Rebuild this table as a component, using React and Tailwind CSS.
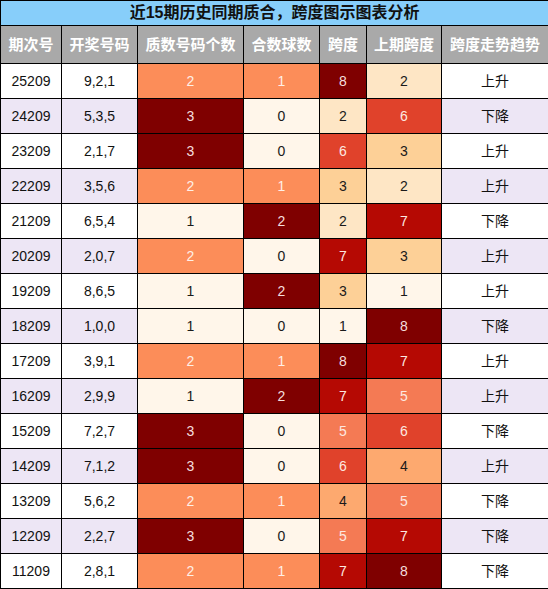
import React from "react";

const rows = [
  ["25209", "9,2,1", 2, 1, 8, 2, "上升"],
  ["24209", "5,3,5", 3, 0, 2, 6, "下降"],
  ["23209", "2,1,7", 3, 0, 6, 3, "上升"],
  ["22209", "3,5,6", 2, 1, 3, 2, "上升"],
  ["21209", "6,5,4", 1, 2, 2, 7, "下降"],
  ["20209", "2,0,7", 2, 0, 7, 3, "上升"],
  ["19209", "8,6,5", 1, 2, 3, 1, "上升"],
  ["18209", "1,0,0", 1, 0, 1, 8, "下降"],
  ["17209", "3,9,1", 2, 1, 8, 7, "上升"],
  ["16209", "2,9,9", 1, 2, 7, 5, "上升"],
  ["15209", "7,2,7", 3, 0, 5, 6, "下降"],
  ["14209", "7,1,2", 3, 0, 6, 4, "上升"],
  ["13209", "5,6,2", 2, 1, 4, 5, "下降"],
  ["12209", "2,2,7", 3, 0, 5, 7, "下降"],
  ["11209", "2,8,1", 2, 1, 7, 8, "下降"],
];

const spanCls = {
  0: "bg-[#fff6ea] text-[#1a1a1a]",
  1: "bg-[#fff6ea] text-[#1a1a1a]",
  2: "bg-[#fee6c5] text-[#1a1a1a]",
  3: "bg-[#fdd097] text-[#1a1a1a]",
  4: "bg-[#fda96f] text-[#1a1a1a]",
  5: "bg-[#f47a54] text-[#fde8e0]",
  6: "bg-[#e0422b] text-[#fde8e0]",
  7: "bg-[#b50903] text-[#fde8e0]",
  8: "bg-[#7f0000] text-[#f5dede]",
};

const primeCls = {
  1: "bg-[#fff6ea] text-[#1a1a1a]",
  2: "bg-[#fc8d59] text-[#fff0e8]",
  3: "bg-[#7f0000] text-[#f5dede]",
};
const compCls = {
  0: "bg-[#fff6ea] text-[#1a1a1a]",
  1: "bg-[#fc8d59] text-[#fff0e8]",
  2: "bg-[#7f0000] text-[#f5dede]",
};

const headers = ["期次号", "开奖号码", "质数号码个数", "合数球数", "跨度", "上期跨度", "跨度走势趋势"];
const widths = ["w-[61px]", "w-[76px]", "w-[106px]", "w-[76px]", "w-[47px]", "w-[75px]", "w-[107px]"];

export default function App() {
  const font = { fontFamily: '"Liberation Sans", "Noto Sans CJK SC", sans-serif' };
  return (
    <div className="w-[548px] h-[589px] bg-white" style={font}>
      <table className="w-[548px] table-fixed border-collapse border border-black text-[14px]">
        <colgroup>
          {widths.map((w, i) => (
            <col key={i} className={w} />
          ))}
        </colgroup>
        <thead>
          <tr className="h-[25px]">
            <th colSpan={7} className="bg-[#87cefa] border border-black text-[16px] font-bold text-[#111] leading-none p-0">
              近15期历史同期质合，跨度图示图表分析
            </th>
          </tr>
          <tr className="h-[38px]">
            {headers.map((h) => (
              <th key={h} className="bg-[#a9a9a9] border border-black text-white text-[15px] font-bold p-0 leading-none">
                {h}
              </th>
            ))}
          </tr>
        </thead>
        <tbody>
          {rows.map((r, i) => {
            const base = i % 2 === 1 ? "bg-[#ede6f5]" : "bg-white";
            return (
              <tr key={r[0]} className="h-[35px]">
                <td className={`${base} border border-black text-center text-[#111] p-0`}>{r[0]}</td>
                <td className={`${base} border border-black text-center text-[#111] p-0`}>{r[1]}</td>
                <td className={`${primeCls[r[2]]} border border-black text-center p-0`}>{r[2]}</td>
                <td className={`${compCls[r[3]]} border border-black text-center p-0`}>{r[3]}</td>
                <td className={`${spanCls[r[4]]} border border-black text-center p-0`}>{r[4]}</td>
                <td className={`${spanCls[r[5]]} border border-black text-center p-0`}>{r[5]}</td>
                <td className={`${base} border border-black text-center text-[#111] p-0`}>{r[6]}</td>
              </tr>
            );
          })}
        </tbody>
      </table>
    </div>
  );
}
